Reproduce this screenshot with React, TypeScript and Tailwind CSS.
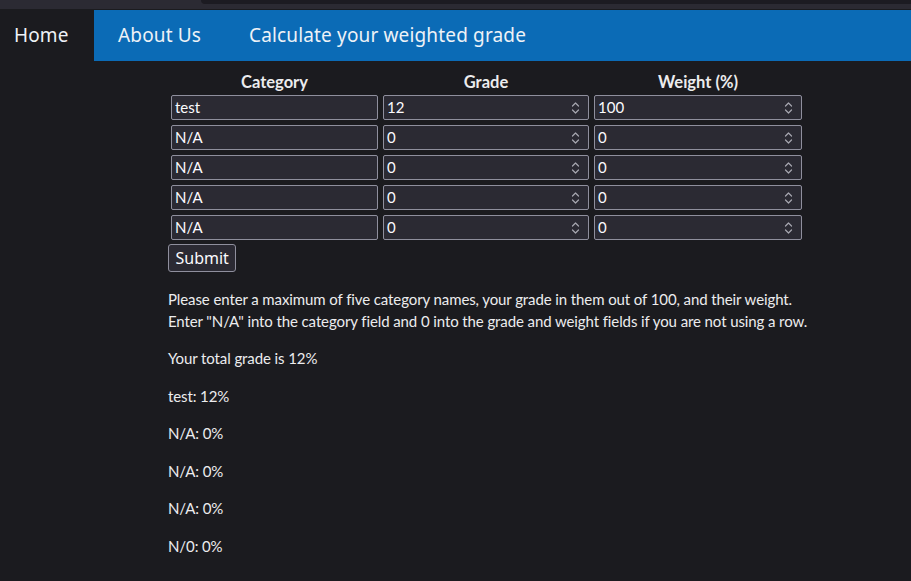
import React from "react";

type Row = { category: string; grade: string; weight: string };

const rows: Row[] = [
  { category: "test", grade: "12", weight: "100" },
  { category: "N/A", grade: "0", weight: "0" },
  { category: "N/A", grade: "0", weight: "0" },
  { category: "N/A", grade: "0", weight: "0" },
  { category: "N/A", grade: "0", weight: "0" },
];

const results = ["test: 12%", "N/A: 0%", "N/A: 0%", "N/A: 0%", "N/0: 0%"];

function Spinner() {
  return (
    <svg
      width="9"
      height="14"
      viewBox="0 0 9 14"
      fill="none"
      stroke="#a7a7b0"
      strokeWidth="1.2"
      strokeLinecap="round"
      strokeLinejoin="round"
      className="shrink-0"
    >
      <path d="M1.5 5 L4.5 2 L7.5 5" />
      <path d="M1.5 9 L4.5 12 L7.5 9" />
    </svg>
  );
}

function Field({ value, number }: { value: string; number?: boolean }) {
  return (
    <div className="flex h-[25px] items-center rounded-[2px] border border-[#8f8f9d] bg-[#2b2a33] pl-[3px] pr-[8px] text-[15px] text-[#fbfbfe]">
      <span className="flex-1 leading-none">{value}</span>
      {number && <Spinner />}
    </div>
  );
}

export default function App() {
  return (
    <div className="min-h-[581px] bg-[#1b1b1f] font-['Lato','Liberation_Sans',sans-serif] text-[#ececee]">
      {/* browser chrome strip */}
      <div className="flex h-[9px] bg-[#2b2a33]">
        <div className="w-[201px]" />
        <div className="h-[4px] flex-1 rounded-bl-[5px] bg-[#1c1b22]" />
      </div>

      <nav className="mt-[1px] flex h-[51px] items-center bg-[#0b6bb6] font-['Noto_Sans','Open_Sans',sans-serif] text-[19px] tracking-[0.15px] text-[#eef2f7]">
        <a className="flex h-full w-[94px] items-center bg-[#1b1b1f] pl-[14px]">Home</a>
        <a className="flex h-full items-center px-6">About Us</a>
        <a className="flex h-full items-center px-6">Calculate your weighted grade</a>
      </nav>

      <main className="ml-[168px] pt-[10px]">
        <div className="grid w-[637px] grid-cols-[207px_206px_208px] gap-x-[5px] gap-y-[5px] pl-[3px]">
          <div className="mb-[-3px] text-center text-[16.5px] font-bold leading-[22px]">Category</div>
          <div className="mb-[-3px] text-center text-[16.5px] font-bold leading-[22px]">Grade</div>
          <div className="mb-[-3px] text-center text-[16.5px] font-bold leading-[22px]">Weight (%)</div>
          {rows.map((r, i) => (
            <React.Fragment key={i}>
              <Field value={r.category} />
              <Field value={r.grade} number />
              <Field value={r.weight} number />
            </React.Fragment>
          ))}
        </div>

        <button className="mt-[4px] h-[28px] rounded-[3px] border border-[#8f8f9d] bg-[#2b2a33] px-[6.5px] font-['Noto_Sans',sans-serif] text-[16px] text-[#fbfbfe]">
          Submit
        </button>

        <div className="text-[15px] leading-[22px] tracking-[-0.1px]">
          <p className="mt-[16px]">
            Please enter a maximum of five category names, your grade in them out of 100, and their weight.
            <br />
            Enter "N/A" into the category field and 0 into the grade and weight fields if you are not using a row.
          </p>
          <p className="mt-[15px]">Your total grade is 12%</p>
          {results.map((t, i) => (
            <p key={i} className="mt-[15.5px]">
              {t}
            </p>
          ))}
        </div>
      </main>
    </div>
  );
}
